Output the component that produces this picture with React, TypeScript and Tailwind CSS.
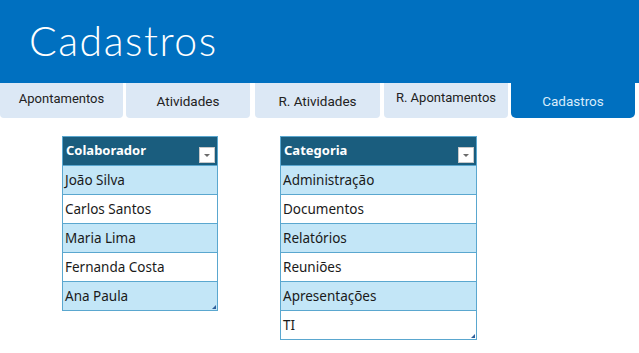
import React from "react";

const tabs = [
  { label: "Apontamentos", w: "w-[123px]", ml: "ml-0", text: "text-[13px] pt-[6px]" },
  { label: "Atividades", w: "w-[124px]", ml: "ml-[3px]", text: "text-[13.5px] pt-[8px]" },
  { label: "R. Atividades", w: "w-[125px]", ml: "ml-[5px]", text: "text-[13.5px] pt-[8px]" },
  { label: "R. Apontamentos", w: "w-[124px]", ml: "ml-[4px]", text: "text-[13px] pt-[5px]" },
];

function Dropdown() {
  return (
    <div className="absolute right-[2px] top-[10px] w-[16px] h-[16px] bg-white border border-[#c8c8c8] flex items-center justify-center">
      <svg width="8" height="5" viewBox="0 0 8 5">
        <path d="M1 1 L7 1 L4 4 Z" fill="#6b6b6b" />
      </svg>
    </div>
  );
}

function Table({ title, rows, width }: { title: string; rows: string[]; width: string }) {
  return (
    <div className={`${width} border border-[#5aa7cf] relative`}>
      <div className="h-[28px] bg-[#1a5d7e] relative flex items-center pl-[3px]">
        <span className="text-white font-bold text-[13px]" style={{ fontFamily: "'Noto Sans', sans-serif" }}>
          {title}
        </span>
        <Dropdown />
      </div>
      {rows.map((r, i) => (
        <div
          key={r}
          className={`h-[29px] flex items-center pl-[2px] border-t border-[#5aa7cf] ${
            i % 2 === 0 ? "bg-[#c3e6f7]" : "bg-white"
          }`}
        >
          <span className="text-[13.5px] text-[#1a1a1a]" style={{ fontFamily: "'Noto Sans', sans-serif" }}>
            {r}
          </span>
        </div>
      ))}
      <div className="absolute right-[1px] bottom-[1px] w-0 h-0 border-l-[4px] border-l-transparent border-b-[4px] border-b-[#2f5f9a]" />
    </div>
  );
}

export default function App() {
  return (
    <div className="w-[639px] h-[353px] bg-white overflow-hidden relative">
      <div className="h-[83px] bg-[#0070c0] flex items-start pl-[29px] pt-[10px]">
        <span
          className="text-white text-[41px] tracking-[1.5px]"
          style={{ fontFamily: "'Lato', 'Open Sans', sans-serif", fontWeight: 300 }}
        >
          Cadastros
        </span>
      </div>
      <div className="flex h-[35px]">
        {tabs.map((t) => (
          <div
            key={t.label}
            className={`${t.w} ${t.ml} h-[35px] bg-[#dce8f5] rounded-b-[4px] flex justify-center ${t.text} text-[#222]`}
            style={{ fontFamily: "Roboto, sans-serif" }}
          >
            {t.label}
          </div>
        ))}
        <div
          className="w-[124px] ml-[3px] h-[35px] bg-[#0070c0] rounded-b-[5px] flex justify-center pt-[8px] text-[13.5px] text-[#d8ecfb]"
          style={{ fontFamily: "Roboto, sans-serif" }}
        >
          Cadastros
        </div>
      </div>
      <div className="flex mt-[18px] items-start">
        <div className="ml-[62px]">
          <Table
            title="Colaborador"
            width="w-[156px]"
            rows={["João Silva", "Carlos Santos", "Maria Lima", "Fernanda Costa", "Ana Paula"]}
          />
        </div>
        <div className="ml-[62px]">
          <Table
            title="Categoria"
            width="w-[197px]"
            rows={["Administração", "Documentos", "Relatórios", "Reuniões", "Apresentações", "TI"]}
          />
        </div>
      </div>
    </div>
  );
}
